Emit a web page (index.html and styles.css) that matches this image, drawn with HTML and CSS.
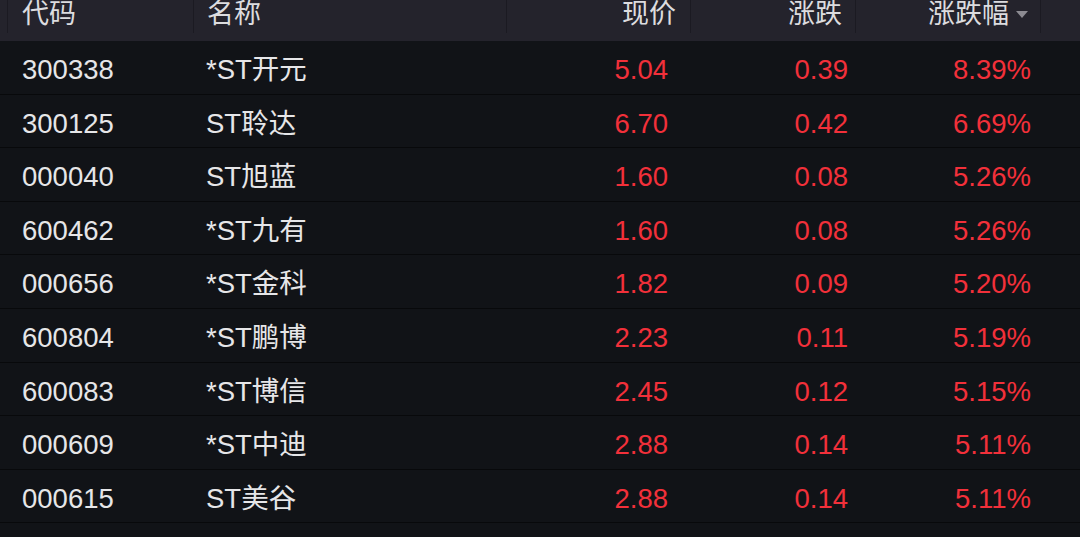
FILE: index.html
```html
<!DOCTYPE html>
<html lang="zh-CN">
<head>
<meta charset="utf-8">
<link rel="stylesheet" href="styles.css">
</head>
<body>
<div class="table">
  <div class="head">
    <div class="h-lead"></div>
    <div class="h-cell h-code">代码</div>
    <div class="h-cell h-name">名称</div>
    <div class="h-cell h-num h-price">现价</div>
    <div class="h-cell h-num h-chg">涨跌</div>
    <div class="h-cell h-num h-pct">涨跌幅<span class="tri"></span></div>
    <div class="h-cell h-tail"></div>
  </div>
  <div class="row"><div class="c-code">300338</div><div class="c-name">*ST开元</div><div class="c-price">5.04</div><div class="c-chg">0.39</div><div class="c-pct">8.39%</div></div>
  <div class="row"><div class="c-code">300125</div><div class="c-name">ST聆达</div><div class="c-price">6.70</div><div class="c-chg">0.42</div><div class="c-pct">6.69%</div></div>
  <div class="row"><div class="c-code">000040</div><div class="c-name">ST旭蓝</div><div class="c-price">1.60</div><div class="c-chg">0.08</div><div class="c-pct">5.26%</div></div>
  <div class="row"><div class="c-code">600462</div><div class="c-name">*ST九有</div><div class="c-price">1.60</div><div class="c-chg">0.08</div><div class="c-pct">5.26%</div></div>
  <div class="row"><div class="c-code">000656</div><div class="c-name">*ST金科</div><div class="c-price">1.82</div><div class="c-chg">0.09</div><div class="c-pct">5.20%</div></div>
  <div class="row"><div class="c-code">600804</div><div class="c-name">*ST鹏博</div><div class="c-price">2.23</div><div class="c-chg">0.11</div><div class="c-pct">5.19%</div></div>
  <div class="row"><div class="c-code">600083</div><div class="c-name">*ST博信</div><div class="c-price">2.45</div><div class="c-chg">0.12</div><div class="c-pct">5.15%</div></div>
  <div class="row"><div class="c-code">000609</div><div class="c-name">*ST中迪</div><div class="c-price">2.88</div><div class="c-chg">0.14</div><div class="c-pct">5.11%</div></div>
  <div class="row"><div class="c-code">000615</div><div class="c-name">ST美谷</div><div class="c-price">2.88</div><div class="c-chg">0.14</div><div class="c-pct">5.11%</div></div>
</div>
</body>
</html>
```

FILE: styles.css
```css
html, body {
  margin: 0;
  padding: 0;
  background: #111317;
  width: 1080px;
  height: 537px;
  overflow: hidden;
}
body {
  font-family: "Liberation Sans", "Noto Sans CJK SC", sans-serif;
  font-size: 27px;
  color: #e6e6e8;
}
.table {
  display: flex;
  flex-direction: column;
}
.head {
  display: flex;
  align-items: flex-start;
  height: 41px;
  background: #24232c;
  color: #dcdcdf;
}
.h-lead { width: 7px; height: 33px; }
.h-cell {
  height: 33px;
  line-height: 28px;
  border-left: 1px solid #1b1a22;
  box-sizing: border-box;
}
.h-code { width: 186px; padding-left: 14px; }
.h-name { width: 313px; padding-left: 13px; }
.h-num { text-align: right; }
.h-price { width: 184px; padding-right: 14px; }
.h-chg { width: 165px; padding-right: 13px; }
.h-pct { width: 185px; padding-right: 12px; display: flex; justify-content: flex-end; align-items: flex-start; }
.h-tail { flex: 1; }
.tri {
  width: 0;
  height: 0;
  border-left: 6px solid transparent;
  border-right: 6px solid transparent;
  border-top: 7px solid #8c8b92;
  margin-left: 7px;
  margin-top: 11px;
}
.row {
  display: flex;
  height: 53.6px;
  box-sizing: border-box;
  border-bottom: 1px solid #08090b;
  line-height: 48px;
  padding-top: 5px;
  font-size: 27.5px;
}
.c-code { width: 193px; padding-left: 22px; box-sizing: border-box; }
.c-name { width: 313px; padding-left: 13px; box-sizing: border-box; }
.c-price, .c-chg, .c-pct {
  color: #f2303a;
  text-align: right;
  box-sizing: border-box;
}
.c-price { width: 184px; padding-right: 22px; }
.c-chg { width: 165px; padding-right: 7px; }
.c-pct { width: 185px; padding-right: 9px; }
```
